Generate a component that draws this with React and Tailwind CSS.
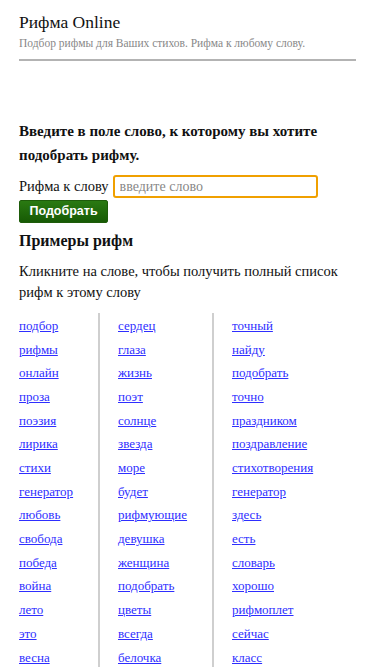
const col1 = ['подбор', 'рифмы', 'онлайн', 'проза', 'поэзия', 'лирика', 'стихи', 'генератор', 'любовь', 'свобода', 'победа', 'война', 'лето', 'это', 'весна'];
const col2 = ['сердец', 'глаза', 'жизнь', 'поэт', 'солнце', 'звезда', 'море', 'будет', 'рифмующие', 'девушка', 'женщина', 'подобрать', 'цветы', 'всегда', 'белочка'];
const col3 = ['точный', 'найду', 'подобрать', 'точно', 'праздником', 'поздравление', 'стихотворения', 'генератор', 'здесь', 'есть', 'словарь', 'хорошо', 'рифмоплет', 'сейчас', 'класс'];

function WordList({ words }) {
  return (
    <ul className="flex flex-col">
      {words.map((w, i) => (
        <li key={i} className="h-[23.7px] leading-[23.7px]">
          <a href="#" className="font-['Liberation_Serif'] text-[13px] text-[#2e2eff] underline">{w}</a>
        </li>
      ))}
    </ul>
  );
}

export default function App() {
  return (
    <div className="h-[667px] overflow-hidden bg-white px-[19px] font-['Liberation_Serif'] text-[#111]">
      <header className="pt-[11px]">
        <h1 className="font-['Liberation_Serif'] text-[17.5px] leading-[22px]">Рифма Online</h1>
        <p className="mt-[3px] font-['Liberation_Serif'] text-[11.5px] leading-[14px] text-[#888]">Подбор рифмы для Ваших стихов. Рифма к любому слову.</p>
        <hr className="mt-[9px] border-t-2 border-[#b3b3b3]" />
      </header>

      <section className="mt-[58px]">
        <h2 className="font-['Liberation_Serif'] text-[15px] font-bold leading-[24px]">Введите в поле слово, к которому вы хотите подобрать рифму.</h2>
        <form className="mt-[8px]" onSubmit={(e) => e.preventDefault()}>
          <div className="flex h-[23px] items-center gap-[4px]">
            <label className="font-['Liberation_Serif'] text-[14.5px]">Рифма к слову</label>
            <input
              type="text"
              placeholder="введите слово"
              className="h-[23px] w-[205px] rounded-[3px] border-2 border-[#f0a000] px-[5px] font-['Liberation_Serif'] text-[14px] placeholder:text-[#888] outline-none"
            />
          </div>
          <button className="mt-[1px] h-[23px] w-[89px] rounded-[2px] border border-[#1e5c0a] bg-gradient-to-b from-[#2a7a12] to-[#175a05] font-['Liberation_Sans'] text-[12.5px] font-bold text-white">
            Подобрать
          </button>
        </form>
      </section>

      <h2 className="mt-[6px] font-['Liberation_Serif'] text-[16px] font-bold leading-[24px]">Примеры рифм</h2>
      <p className="mt-[8px] font-['Liberation_Serif'] text-[14.5px] leading-[21px]">Кликните на слове, чтобы получить полный список рифм к этому слову</p>

      <div className="mt-[10px] flex">
        <div className="w-[79px]"><WordList words={col1} /></div>
        <div className="w-[114px] border-l-2 border-[#cfcfcf] pl-[18px]"><WordList words={col2} /></div>
        <div className="flex-1 border-l-2 border-[#cfcfcf] pl-[18px]"><WordList words={col3} /></div>
      </div>
    </div>
  );
}
